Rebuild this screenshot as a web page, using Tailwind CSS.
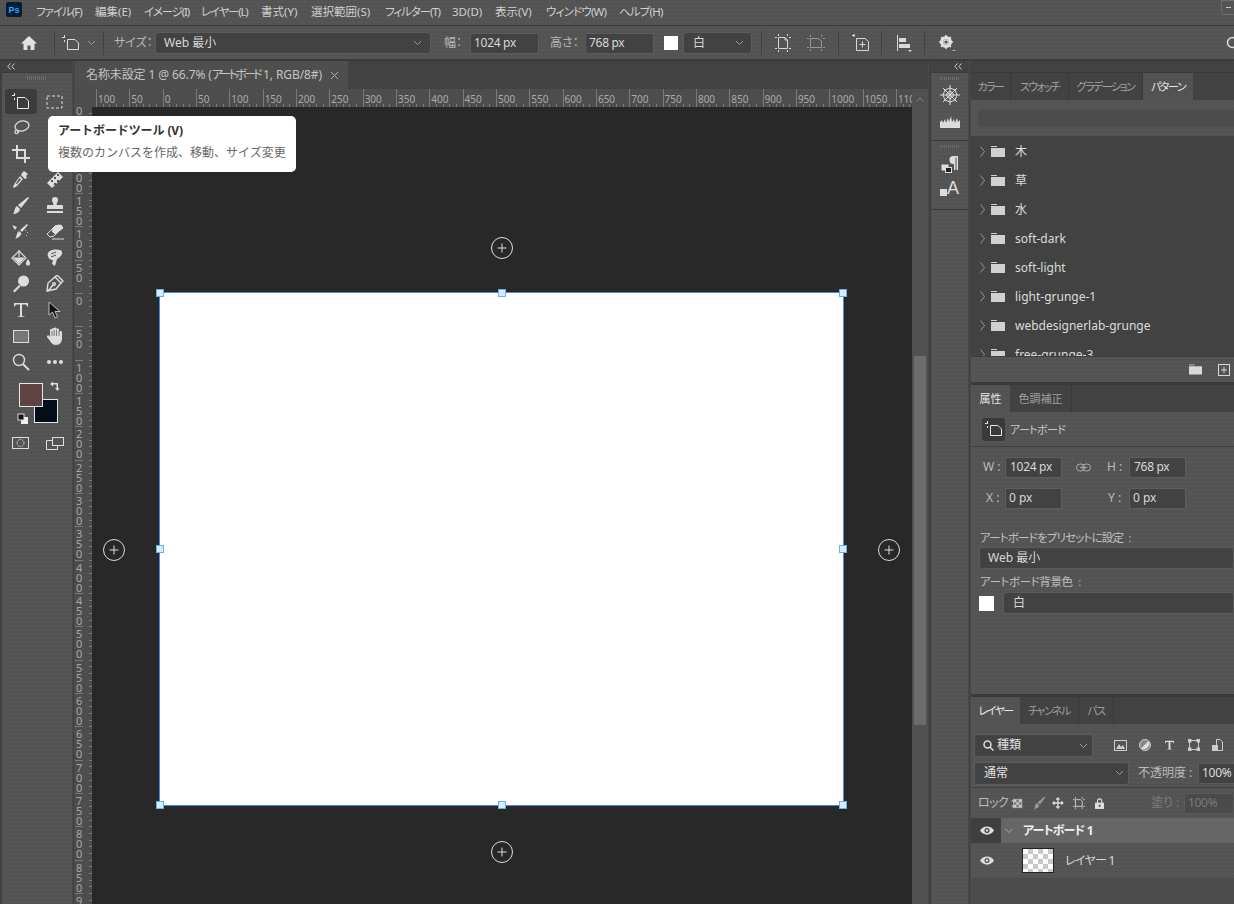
<!DOCTYPE html>
<html lang="ja"><head><meta charset="utf-8">
<script src="https://cdn.jsdelivr.net/npm/@tailwindcss/browser@4"></script>
</head>
<body class="bg-[#535353]">
<div class="relative flex flex-col w-[1234px] h-[904px] overflow-hidden bg-[#535353] bg-[radial-gradient(circle,#5b5b5b_0.6px,transparent_0.8px)] bg-[length:4px_4px] text-[12px] leading-none text-[#d4d4d4] font-['Noto_Sans','Noto_Sans_CJK_JP',sans-serif] [font-feature-settings:'palt']">

<!-- menu -->
<header class="relative flex items-center h-[24px] pb-[1px] shrink-0 border-b border-[#3c3c3c] box-content pl-[36px] whitespace-nowrap text-[#cfcfcf] text-[11.5px] -mb-[1px]">
  <svg class="absolute left-[6px] top-[2px]" width="16" height="15" viewBox="0 0 16 15"><rect width="16" height="15" rx="2" fill="#001e36"/><text x="2.5" y="11" font-size="9" font-weight="700" fill="#31a8ff" font-family="Liberation Sans">Ps</text></svg>
  <span class="w-[59px] tracking-[-1px]">ファイル(F)</span>
  <span class="w-[49px]">編集(E)</span>
  <span class="w-[57px] tracking-[-1.2px]">イメージ(I)</span>
  <span class="w-[60px] tracking-[-1.2px]">レイヤー(L)</span>
  <span class="w-[50px]">書式(Y)</span>
  <span class="w-[74px]">選択範囲(S)</span>
  <span class="w-[67px] tracking-[-1.1px]">フィルター(T)</span>
  <span class="w-[43px]">3D(D)</span>
  <span class="w-[51px]">表示(V)</span>
  <span class="w-[73px] tracking-[-0.8px]">ウィンドウ(W)</span>
  <span class="tracking-[-0.8px]">ヘルプ(H)</span>
  <span class="absolute left-[1221px] top-0 w-[20px] h-[15px] border border-[#6e6e6e] rounded-bl-[3px] flex items-center pl-[4px]"><span class="w-[5px] h-[1px] bg-[#ccc]"></span></span>
</header>

<!-- options -->
<div class="flex items-center h-[32px] pt-[2px] shrink-0 border-b-2 border-[#3a3a3a] box-content whitespace-nowrap">
  <div class="w-[54px] h-[24px] flex items-center justify-center border-r border-[#404040] box-content pl-[6px] -ml-[6px]">
    <svg class="ml-[4px]" width="18" height="16" viewBox="0 0 18 16" fill="#e2e2e2"><path d="M9 1 L1 8.5 H3.5 V15 H7.5 V10.5 H10.5 V15 H14.5 V8.5 H17 Z"/></svg>
  </div>
  <div class="w-[49px] h-[24px] flex items-center border-r border-[#404040] pl-[7px] gap-[7px]">
    <svg width="18" height="16" viewBox="0 0 18 16" fill="none" stroke="#dcdcdc"><path d="M5.5 4.5 H13 L16.5 8 V14.5 H5.5 Z"/><path d="M2.5 0 V3 M0 2.5 H3 M2.5 5 V7"/></svg>
    <svg width="9" height="6" viewBox="0 0 9 6" fill="none" stroke="#999"><path d="M1 1 L4.5 4.5 L8 1"/></svg>
  </div>
  <span class="ml-[10px] w-[41px] text-[#b8b8b8]">サイズ：</span>
  <div class="w-[276px] h-[22px] bg-[#424242] border border-[#5c5c5c] rounded-[3px] flex items-center justify-between px-[8px] text-[#d8d8d8]"><span>Web 最小</span><svg width="9" height="6" viewBox="0 0 9 6" fill="none" stroke="#999"><path d="M1 1 L4.5 4.5 L8 1"/></svg></div>
  <span class="ml-[13px] w-[26px] text-[#b8b8b8]">幅：</span>
  <div class="w-[69px] h-[21px] bg-[#424242] border border-[#5c5c5c] flex items-center pl-[3px] text-[#d8d8d8] tracking-[-0.3px]">1024 px</div>
  <span class="ml-[11px] w-[35px] text-[#b8b8b8]">高さ：</span>
  <div class="w-[69px] h-[21px] bg-[#424242] border border-[#5c5c5c] flex items-center pl-[3px] text-[#d8d8d8] tracking-[-0.3px]">768 px</div>
  <span class="ml-[10px] w-[14px] h-[14px] bg-white shrink-0"></span>
  <div class="ml-[5px] w-[69px] h-[22px] bg-[#424242] border border-[#5c5c5c] rounded-[3px] flex items-center justify-between px-[9px] text-[#d8d8d8]"><span>白</span><svg width="9" height="6" viewBox="0 0 9 6" fill="none" stroke="#999" class="-mr-[2px]"><path d="M1 1 L4.5 4.5 L8 1"/></svg></div>
  <span class="ml-[9px] w-[1px] h-[24px] bg-[#404040]"></span>
  <svg class="ml-[13px]" width="16" height="18" viewBox="0 0 16 18" fill="none" stroke="#d8d8d8"><path d="M3.5 3.5 H10 L12.5 6 V14.5 H3.5 Z M10 3.5 V6 H12.5"/><path d="M0 3.5 H2 M14 3.5 H16 M0 14.5 H2 M14 14.5 H16 M3.5 0 V2 M12.5 0 V2 M3.5 16 V18 M12.5 16 V18"/></svg>
  <svg class="ml-[16px]" width="18" height="16" viewBox="0 0 18 16" fill="none" stroke="#999"><path d="M3.5 3.5 H11 L14.5 6 V12.5 H3.5 Z"/><path d="M0 3.5 H2 M16 3.5 H18 M0 12.5 H2 M16 12.5 H18 M3.5 0 V2 M14.5 0 V2 M3.5 14 V16 M14.5 14 V16"/></svg>
  <span class="ml-[13px] w-[1px] h-[24px] bg-[#404040]"></span>
  <svg class="ml-[13px]" width="18" height="18" viewBox="0 0 18 18" fill="none" stroke="#d8d8d8"><path d="M4.5 4.5 H13 L16.5 7.5 V16.5 H4.5 Z M7.5 10.5 H13.5 M10.5 7.5 V13.5"/><path d="M2 0 V3 M0 1.5 H3"/></svg>
  <span class="ml-[11px] w-[1px] h-[24px] bg-[#404040]"></span>
  <svg class="ml-[14px]" width="16" height="18" viewBox="0 0 16 18" fill="#d8d8d8"><rect x="1" y="1" width="1" height="16"/><rect x="3" y="4" width="7" height="4"/><rect x="3" y="10" width="11" height="4"/><path d="M12 16 h4 l-2 2z" /></svg>
  <span class="ml-[12px] w-[1px] h-[24px] bg-[#404040]"></span>
  <svg class="ml-[14px]" width="18" height="16" viewBox="0 0 18 16"><circle cx="7" cy="7" r="4.5" fill="none" stroke="#e0e0e0" stroke-width="3"/><path d="M7 0 V14 M0 7 H14 M2 2 L12 12 M12 2 L2 12" stroke="#e0e0e0" stroke-width="1.5"/><circle cx="7" cy="7" r="1.6" fill="#535353"/><path d="M13 15 h4 l-2 1z" fill="#ddd"/></svg>
  <svg class="absolute left-[1226px] top-[36px]" width="14" height="14" viewBox="0 0 14 14" fill="none" stroke="#ddd" stroke-width="1.5"><circle cx="6.5" cy="6.5" r="5"/></svg>
</div>

<!-- main -->
<div class="flex flex-1 min-h-0">
  <!-- left tools -->
  <aside class="w-[72px] shrink-0 border-l-2 border-[#3f3f3f] flex flex-col">
    <div class="h-[11px] bg-[#424242] border-b border-[#3a3a3a] box-content flex items-center pl-[5px] text-[#ccc]"><svg width="8" height="7" viewBox="0 0 8 7" fill="none" stroke="#ccc"><path d="M3.5 .5 L.8 3.5 L3.5 6.5 M7.5 .5 L4.8 3.5 L7.5 6.5"/></svg></div>
    <div class="h-[4px] mt-[3px] mx-auto w-[20px] bg-[repeating-linear-gradient(90deg,#6b6b6b_0_1px,transparent_1px_2px)]"></div>
    <div class="grid grid-cols-[35px_33px] auto-rows-[26px] mt-[9px] pl-[1px]">
      <div class="relative flex items-center justify-center"><span class="absolute left-[2px] top-0 w-[32px] h-[25px] bg-[#3c3c3c] rounded-[3px]"></span>
        <svg class="relative -mt-[2px]" width="20" height="18" viewBox="0 0 20 18" fill="none" stroke="#e8e8e8"><path d="M6.5 5.5 H14 L17.5 9 V16.5 H6.5 Z"/><path d="M3.5 1 V4 M1 3.5 H4 M3.5 6 V8"/></svg></div>
      <div class="flex items-center justify-center -mt-[1px]"><svg width="18" height="14" viewBox="0 0 18 14" fill="none" stroke="#ddd" stroke-dasharray="3 2"><rect x="1" y="1" width="15" height="12"/></svg></div>

      <div class="flex items-center justify-center"><svg width="18" height="18" viewBox="0 0 18 18" fill="none" stroke="#ddd" stroke-width="1.3"><ellipse cx="10" cy="7" rx="7" ry="5" transform="rotate(-15 10 7)"/><path d="M4 11 C2 13 3 16 6 14 C7 13 6 12 5 13"/></svg></div>
      <div class="flex items-center justify-center"><svg width="14" height="14" viewBox="0 0 14 14" fill="none" stroke="#ddd" stroke-dasharray="2 2"><circle cx="7" cy="7" r="6"/></svg></div>

      <div class="flex items-center justify-center -mt-[1px]"><svg width="18" height="18" viewBox="0 0 18 18" fill="none" stroke="#ddd" stroke-width="2"><path d="M5 0 V13 H18 M0 5 H13 V18"/></svg></div>
      <div class="flex items-center justify-center -mt-[1px]"><svg width="14" height="16" viewBox="0 0 14 16" fill="none" stroke="#ddd"><path d="M1 2 V14 M4 1 H10"/></svg></div>

      <div class="flex items-center justify-center"><svg width="16" height="18" viewBox="0 0 16 18" fill="#ddd"><path d="M9 2 L11 0 L15 3 L13 5 L14 7 L12 8 L8 4 Z"/><path d="M7 5 L10 8 L4 15 L1 17 L0 16 L2 12 Z M6.5 7 L3 12.5 L3.5 13.5 L8 8.5Z"/></svg></div>
      <div class="flex items-center justify-center"><svg width="18" height="18" viewBox="0 0 18 18" fill="#ddd"><path d="M1 12 L12 1 L17 6 L6 17 Z"/><g fill="#535353"><rect x="8" y="6" width="2" height="2"/><rect x="5" y="9" width="2" height="2"/><rect x="11" y="9" width="2" height="2"/><rect x="8" y="12" width="2" height="2"/><rect x="11" y="3" width="2" height="2"/></g></svg></div>

      <div class="flex items-center justify-center"><svg width="16" height="18" viewBox="0 0 16 18" fill="#ddd"><path d="M15 0 L16 1 L8 11 L5 8 Z"/><path d="M4 9 L7 12 C7 15 3 17 0 17 C2 15 1 11 4 9Z"/></svg></div>
      <div class="flex items-center justify-center"><svg width="18" height="18" viewBox="0 0 18 18" fill="#ddd"><path d="M6 3 a3 3 0 1 1 6 0 c0 2-1.5 3-1.5 5 H16 a1 1 0 0 1 1 1 V12 H1 V9 a1 1 0 0 1 1-1 H7.5 C7.5 6 6 5 6 3Z"/><rect x="1" y="14" width="16" height="2"/></svg></div>

      <div class="flex items-center justify-center"><svg width="20" height="18" viewBox="0 0 20 18" fill="#ddd"><path d="M9 7 L16 1 L17 2 L11 9 Z"/><path d="M8 8 L10.5 10.5 C10 13 7 15 4 16 C6 14 5 10 8 8 Z"/><path d="M1 2 L6 4 L4 7 Z"/><g fill="#bbb"><rect x="14" y="7" width="1" height="1"/><rect x="16" y="9" width="1" height="1"/><rect x="15" y="12" width="1" height="1"/></g></svg></div>
      <div class="flex items-center justify-center"><svg width="18" height="16" viewBox="0 0 18 16" fill="none" stroke="#ddd"><path d="M1 10 L9 2 L13 1 L16 4 L8 12 L4 13 Z" fill="none"/><path d="M9 2 L15 1 L17 4 L9 10 L6 7 Z" fill="#ddd"/><path d="M6 15 H18"/></svg></div>

      <div class="flex items-center justify-center"><svg width="20" height="18" viewBox="0 0 20 18" fill="none" stroke="#ddd" stroke-width="1.2"><path d="M8 2 L15 9 L8 16 L1 9 Z"/><path d="M8 1 V8"/><path d="M3.500 9 H12.500 L8 14Z" fill="#ddd"/><path d="M17 11 c2 3 2 5 0 5 c-2 0-2-2 0-5Z" fill="#ddd"/></svg></div>
      <div class="flex items-center justify-center"><svg width="18" height="18" viewBox="0 0 18 18" fill="#ddd"><path d="M4 2 C8 0 15 0 16 3 C17 6 13 9 11 10 L9 17 L6 15 L7 11 C4 11 2 9 2 7 C1 5 2 3 4 2Z"/><path d="M5 5 L10 3 M5 8 L10 6" stroke="#535353" fill="none"/></svg></div>

      <div class="flex items-center justify-center"><svg width="18" height="18" viewBox="0 0 18 18" fill="#ddd"><circle cx="11.5" cy="6" r="5.5"/><path d="M7 10 L1 16 L2.5 17.5 L8.5 11.5Z"/></svg></div>
      <div class="flex items-center justify-center"><svg width="18" height="18" viewBox="0 0 18 18" fill="none" stroke="#ddd" stroke-width="1.4"><path d="M1 16 L2 8 L9 2 L15 8 L10 14 Z"/><path d="M9 2 L11 0 L17 6 L15 8"/><path d="M2 16 L7 10"/><circle cx="8" cy="9" r="1.3"/></svg></div>

      <div class="flex items-center justify-center"><svg width="16" height="16" viewBox="0 0 16 16" fill="#ddd"><path d="M1 1 H15 V4.500 H14 C14 3 13 2.500 12 2.500 H9 V13 C9 14 10 14.500 11.500 14.500 V15 H4.500 V14.500 C6 14.500 7 14 7 13 V2.500 H4 C3 2.500 2 3 2 4.500 H1 Z"/></svg></div>
      <div class="flex items-center justify-center"><svg width="14" height="17" viewBox="0 0 14 17"><path d="M1 0 V13 L4.5 10 L7 16 L9.5 15 L7 9.5 H12 Z" fill="#111" stroke="#ddd" stroke-width=".8"/></svg></div>

      <div class="flex items-center justify-center"><span class="w-[16px] h-[13px] bg-[#777] border border-[#ddd]"></span></div>
      <div class="flex items-center justify-center"><svg width="18" height="18" viewBox="0 0 18 18" fill="#ddd"><path d="M1 9 C2 8 3 8 4 10 V3 C4 1.5 6 1.5 6 3 V2 C6 .5 8 .5 8 2 V1.5 C8 0 10.500 0 10.500 1.500 V2.500 C10.500 1 13 1 13 2.500 V5 C13 3.500 16 3.500 16 5 V11 C16 15 14 18 10 18 C6 18 5 15 1 10 Z"/><path d="M6 4 V9 M8.200 3 V9 M10.500 3 V9 M13 4 V9" stroke="#535353" fill="none" stroke-width=".7"/></svg></div>

      <div class="flex items-center justify-center"><svg width="18" height="18" viewBox="0 0 18 18" fill="none" stroke="#ddd" stroke-width="1.4"><circle cx="7" cy="7" r="5.500"/><path d="M11 11 L17 17" stroke-width="2"/></svg></div>
      <div class="flex items-center justify-center gap-[2px]"><span class="w-[4px] h-[4px] rounded-full bg-[#ddd]"></span><span class="w-[4px] h-[4px] rounded-full bg-[#ddd]"></span><span class="w-[4px] h-[4px] rounded-full bg-[#ddd]"></span></div>
    </div>
    <!-- colour -->
    <div class="relative h-[52px] mt-[8px] ml-[-2px]">
      <span class="absolute left-[34px] top-[16px] w-[24px] h-[24px] bg-[#050e18] border border-[#e6e6e6]"></span>
      <span class="absolute left-[19px] top-0 w-[24px] h-[24px] bg-[#5f4343] border border-[#e6e6e6]"></span>
      <svg class="absolute left-[49px] top-[-2px]" width="12" height="12" viewBox="0 0 12 12" fill="#ddd"><path d="M1 3 L4 .5 V2 H9 V7 H10.500 L8.500 10 L6 7 H7.500 V3.500 H4 V5.500 Z"/></svg>
      <svg class="absolute left-[17px] top-[30px]" width="12" height="12" viewBox="0 0 12 12"><rect x="4" y="4" width="7" height="7" fill="#eee"/><rect x="1" y="1" width="6" height="6" fill="#111" stroke="#ddd"/></svg>
    </div>
    <div class="flex pl-[10px] gap-[16px] items-center h-[16px]">
      <svg width="18" height="13" viewBox="0 0 18 13" fill="none" stroke="#ddd"><rect x=".5" y=".5" width="16" height="11"/><circle cx="8.500" cy="6" r="3.500" stroke-dasharray="1.500 1"/></svg>
      <svg width="18" height="13" viewBox="0 0 18 13" fill="none" stroke="#ddd"><rect x="6.500" y=".5" width="11" height="8"/><path d="M6 3.500 H.5 V12.500 H11.500 V9"/></svg>
    </div>
  </aside>
  <div class="w-[3px] shrink-0 bg-[#3f3f3f] border-x border-[#4a4a4a]"></div>

  <!-- document -->
  <main class="w-[853px] shrink-0 flex flex-col">
    <div class="h-[28px] shrink-0 bg-[#424242] flex">
      <div class="w-[273px] h-full bg-[#4e4e4e] flex items-center pl-[11px] text-[#c4c4c4] whitespace-nowrap"><span class="w-[238px] shrink-0 tracking-[-0.1px]">名称未設定 1 @ 66.7% (<span class="tracking-[-2.7px]">アートボード</span> 1, RGB/8#)</span><svg class="ml-[7px] shrink-0" width="7" height="7" viewBox="0 0 7 7" stroke="#aaa"><path d="M0 0 L7 7 M7 0 L0 7"/></svg></div>
    </div>
    <div class="flex flex-1 min-h-0">
      <div class="w-[837px] shrink-0 flex flex-col">
        <!-- h ruler -->
        <div class="flex h-[18px] shrink-0 bg-[#4d4d4d] overflow-hidden text-[10px] text-[#aaa]">
          <div class="w-[21px] shrink-0 h-full"></div>
          <div class="flex bg-[repeating-linear-gradient(90deg,#7a7a7a_0_1px,transparent_1px_6.667px)] bg-[length:100%_3px] bg-bottom bg-no-repeat h-full">
            <span class="w-[33.33px] h-full shrink-0 border-l border-[#7a7a7a] pl-[1px] pt-[5px]">100</span><span class="w-[33.33px] h-full shrink-0 border-l border-[#7a7a7a] pl-[1px] pt-[5px]">50</span><span class="w-[33.33px] h-full shrink-0 border-l border-[#7a7a7a] pl-[1px] pt-[5px]">0</span><span class="w-[33.33px] h-full shrink-0 border-l border-[#7a7a7a] pl-[1px] pt-[5px]">50</span><span class="w-[33.33px] h-full shrink-0 border-l border-[#7a7a7a] pl-[1px] pt-[5px]">100</span><span class="w-[33.33px] h-full shrink-0 border-l border-[#7a7a7a] pl-[1px] pt-[5px]">150</span><span class="w-[33.33px] h-full shrink-0 border-l border-[#7a7a7a] pl-[1px] pt-[5px]">200</span><span class="w-[33.33px] h-full shrink-0 border-l border-[#7a7a7a] pl-[1px] pt-[5px]">250</span><span class="w-[33.33px] h-full shrink-0 border-l border-[#7a7a7a] pl-[1px] pt-[5px]">300</span><span class="w-[33.33px] h-full shrink-0 border-l border-[#7a7a7a] pl-[1px] pt-[5px]">350</span><span class="w-[33.33px] h-full shrink-0 border-l border-[#7a7a7a] pl-[1px] pt-[5px]">400</span><span class="w-[33.33px] h-full shrink-0 border-l border-[#7a7a7a] pl-[1px] pt-[5px]">450</span><span class="w-[33.33px] h-full shrink-0 border-l border-[#7a7a7a] pl-[1px] pt-[5px]">500</span><span class="w-[33.33px] h-full shrink-0 border-l border-[#7a7a7a] pl-[1px] pt-[5px]">550</span><span class="w-[33.33px] h-full shrink-0 border-l border-[#7a7a7a] pl-[1px] pt-[5px]">600</span><span class="w-[33.33px] h-full shrink-0 border-l border-[#7a7a7a] pl-[1px] pt-[5px]">650</span><span class="w-[33.33px] h-full shrink-0 border-l border-[#7a7a7a] pl-[1px] pt-[5px]">700</span><span class="w-[33.33px] h-full shrink-0 border-l border-[#7a7a7a] pl-[1px] pt-[5px]">750</span><span class="w-[33.33px] h-full shrink-0 border-l border-[#7a7a7a] pl-[1px] pt-[5px]">800</span><span class="w-[33.33px] h-full shrink-0 border-l border-[#7a7a7a] pl-[1px] pt-[5px]">850</span><span class="w-[33.33px] h-full shrink-0 border-l border-[#7a7a7a] pl-[1px] pt-[5px]">900</span><span class="w-[33.33px] h-full shrink-0 border-l border-[#7a7a7a] pl-[1px] pt-[5px]">950</span><span class="w-[33.33px] h-full shrink-0 border-l border-[#7a7a7a] pl-[1px] pt-[5px]">1000</span><span class="w-[33.33px] h-full shrink-0 border-l border-[#7a7a7a] pl-[1px] pt-[5px]">1050</span><span class="w-[18px] h-full shrink-0 border-l border-[#7a7a7a] pl-[1px] pt-[5px] overflow-hidden">110</span>
          </div>
        </div>
        <div class="flex flex-1 min-h-0">
          <!-- v ruler -->
          <div class="w-[17px] shrink-0 h-full bg-[#4d4d4d] overflow-hidden text-[11px] leading-[10px] text-[#a8a8a8]">
            <div class="-mt-[14px] bg-[repeating-linear-gradient(180deg,#7a7a7a_0_1px,transparent_1px_6.667px)] bg-[length:3px_100%] bg-right bg-no-repeat">
              <div class="h-[33.33px] border-t border-[#7a7a7a] pl-[1px] pt-[2px] w-[8px] break-all">300</div>
              <div class="h-[33.33px] border-t border-[#7a7a7a] pl-[1px] pt-[2px] w-[8px] break-all">250</div>
              <div class="h-[33.33px] border-t border-[#7a7a7a] pl-[1px] pt-[2px] w-[8px] break-all">200</div>
              <div class="h-[33.33px] border-t border-[#7a7a7a] pl-[1px] pt-[2px] w-[8px] break-all">150</div>
              <div class="h-[33.33px] border-t border-[#7a7a7a] pl-[1px] pt-[2px] w-[8px] break-all">100</div>
              <div class="h-[33.33px] border-t border-[#7a7a7a] pl-[1px] pt-[2px] w-[8px] break-all">50</div>
              <div class="h-[33.33px] border-t border-[#7a7a7a] pl-[1px] pt-[2px] w-[8px] break-all">0</div>
              <div class="h-[33.33px] border-t border-[#7a7a7a] pl-[1px] pt-[2px] w-[8px] break-all">50</div>
              <div class="h-[33.33px] border-t border-[#7a7a7a] pl-[1px] pt-[2px] w-[8px] break-all">100</div>
              <div class="h-[33.33px] border-t border-[#7a7a7a] pl-[1px] pt-[2px] w-[8px] break-all">150</div>
              <div class="h-[33.33px] border-t border-[#7a7a7a] pl-[1px] pt-[2px] w-[8px] break-all">200</div>
              <div class="h-[33.33px] border-t border-[#7a7a7a] pl-[1px] pt-[2px] w-[8px] break-all">250</div>
              <div class="h-[33.33px] border-t border-[#7a7a7a] pl-[1px] pt-[2px] w-[8px] break-all">300</div>
              <div class="h-[33.33px] border-t border-[#7a7a7a] pl-[1px] pt-[2px] w-[8px] break-all">350</div>
              <div class="h-[33.33px] border-t border-[#7a7a7a] pl-[1px] pt-[2px] w-[8px] break-all">400</div>
              <div class="h-[33.33px] border-t border-[#7a7a7a] pl-[1px] pt-[2px] w-[8px] break-all">450</div>
              <div class="h-[33.33px] border-t border-[#7a7a7a] pl-[1px] pt-[2px] w-[8px] break-all">500</div>
              <div class="h-[33.33px] border-t border-[#7a7a7a] pl-[1px] pt-[2px] w-[8px] break-all">550</div>
              <div class="h-[33.33px] border-t border-[#7a7a7a] pl-[1px] pt-[2px] w-[8px] break-all">600</div>
              <div class="h-[33.33px] border-t border-[#7a7a7a] pl-[1px] pt-[2px] w-[8px] break-all">650</div>
              <div class="h-[33.33px] border-t border-[#7a7a7a] pl-[1px] pt-[2px] w-[8px] break-all">700</div>
              <div class="h-[33.33px] border-t border-[#7a7a7a] pl-[1px] pt-[2px] w-[8px] break-all">750</div>
              <div class="h-[33.33px] border-t border-[#7a7a7a] pl-[1px] pt-[2px] w-[8px] break-all">800</div>
              <div class="h-[33.33px] border-t border-[#7a7a7a] pl-[1px] pt-[2px] w-[8px] break-all">850</div>
              <div class="h-[33.33px] border-t border-[#7a7a7a] pl-[1px] pt-[2px] w-[8px] break-all">900</div>
            </div>
          </div>
          <!-- canvas: free placement -->
          <div class="relative w-[820px] h-full bg-[#282828] overflow-hidden">
            <div class="absolute left-[67px] top-[185px] w-[685px] h-[514px] bg-white border border-[#4a8ae0]"></div>
            <span class="absolute left-[64px] top-[182px] w-[8px] h-[8px] bg-[#d8ecfb] border border-[#6bb0ec]"></span>
            <span class="absolute left-[406px] top-[182px] w-[8px] h-[8px] bg-[#d8ecfb] border border-[#6bb0ec]"></span>
            <span class="absolute left-[747px] top-[182px] w-[8px] h-[8px] bg-[#d8ecfb] border border-[#6bb0ec]"></span>
            <span class="absolute left-[64px] top-[438px] w-[8px] h-[8px] bg-[#d8ecfb] border border-[#6bb0ec]"></span>
            <span class="absolute left-[747px] top-[438px] w-[8px] h-[8px] bg-[#d8ecfb] border border-[#6bb0ec]"></span>
            <span class="absolute left-[64px] top-[694px] w-[8px] h-[8px] bg-[#d8ecfb] border border-[#6bb0ec]"></span>
            <span class="absolute left-[406px] top-[694px] w-[8px] h-[8px] bg-[#d8ecfb] border border-[#6bb0ec]"></span>
            <span class="absolute left-[747px] top-[694px] w-[8px] h-[8px] bg-[#d8ecfb] border border-[#6bb0ec]"></span>
            <svg class="absolute left-[399px] top-[130px]" width="22" height="22" viewBox="0 0 22 22" fill="none" stroke="#dcdcdc"><circle cx="11" cy="11" r="10.500"/><path d="M6.500 11 H15.500 M11 6.500 V15.500"/></svg>
            <svg class="absolute left-[11px] top-[432px]" width="22" height="22" viewBox="0 0 22 22" fill="none" stroke="#dcdcdc"><circle cx="11" cy="11" r="10.500"/><path d="M6.500 11 H15.500 M11 6.500 V15.500"/></svg>
            <svg class="absolute left-[786px] top-[432px]" width="22" height="22" viewBox="0 0 22 22" fill="none" stroke="#dcdcdc"><circle cx="11" cy="11" r="10.500"/><path d="M6.500 11 H15.500 M11 6.500 V15.500"/></svg>
            <svg class="absolute left-[399px] top-[734px]" width="22" height="22" viewBox="0 0 22 22" fill="none" stroke="#dcdcdc"><circle cx="11" cy="11" r="10.500"/><path d="M6.500 11 H15.500 M11 6.500 V15.500"/></svg>
          </div>
        </div>
      </div>
      <!-- scrollbar -->
      <div class="w-[16px] shrink-0 h-full flex flex-col items-center pt-[8px] bg-[#505050]">
        <svg width="8" height="5" viewBox="0 0 8 5" fill="none" stroke="#888"><path d="M.5 4.500 L4 1 L7.500 4.500"/></svg>
        <div class="w-[12px] h-[369px] mt-[254px] bg-[#6c6c6c]"></div>
      </div>
    </div>
  </main>
  <div class="w-[3px] shrink-0 bg-[#3f3f3f] border-l border-[#4a4a4a]"></div>

  <!-- icon strip -->
  <div class="w-[37px] shrink-0 flex flex-col">
    <div class="h-[11px] shrink-0 bg-[#424242] -mr-[2px] border-b border-[#3a3a3a] box-content flex items-center justify-center pl-[14px]"><svg width="8" height="7" viewBox="0 0 8 7" fill="none" stroke="#ccc"><path d="M3.500 .5 L.8 3.500 L3.500 6.500 M7.500 .5 L4.800 3.500 L7.500 6.500"/></svg></div>
    <div class="h-[68px] shrink-0 border-b border-[#3a3a3a] flex flex-col items-center pt-[4px]">
      <div class="h-[3px] w-[20px] bg-[repeating-linear-gradient(90deg,#6b6b6b_0_1px,transparent_1px_2px)]"></div>
      <svg class="mt-[5px]" width="20" height="20" viewBox="0 0 20 20" fill="none" stroke="#ddd"><path d="M10 0 V20 M0 10 H20 M3 3 L17 17 M17 3 L3 17"/><path d="M10 3 L15 5 L17 10 L15 15 L10 17 L5 15 L3 10 L5 5Z M10 6.500 L12.500 7.500 L13.500 10 L12.500 12.500 L10 13.500 L7.500 12.500 L6.500 10 L7.500 7.500Z"/></svg>
      <svg class="mt-[11px]" width="20" height="13" viewBox="0 0 20 13" fill="#ddd"><path d="M0 12 V6 L2 4 L3 7 L5 3 L6 7 L8 2 L9 6 L11 0 L12 6 L14 3 L15 7 L17 2 L18 6 L20 4 V12 Z"/></svg>
    </div>
    <div class="h-[69px] shrink-0 border-b border-[#3a3a3a] flex flex-col items-center pt-[4px]">
      <div class="h-[3px] w-[20px] bg-[repeating-linear-gradient(90deg,#6b6b6b_0_1px,transparent_1px_2px)]"></div>
      <svg class="mt-[7px] ml-[1px]" width="18" height="18" viewBox="0 0 18 18"><path d="M12 1 H17 V15 H15.500 V2.500 H14.500 V15 H13 V9 A4 4 0 0 1 12 1Z" fill="#ddd"/><rect x=".5" y="9.500" width="7" height="6" fill="#ddd"/><rect x="4.500" y="12.500" width="6" height="5" fill="#222" stroke="#ddd"/></svg>
      <div class="mt-[6px] flex items-end"><span class="w-[7px] h-[7px] bg-[#ddd] mb-[1px]"></span><span class="text-[18px] leading-[18px] font-['Liberation_Sans'] text-[#ddd]">A</span></div>
    </div>
  </div>
  <div class="w-[3px] shrink-0 bg-[#3f3f3f] border-x border-[#4a4a4a]"></div>

  <!-- right panels -->
  <aside class="flex-1 min-w-0 flex flex-col overflow-hidden whitespace-nowrap">
    <div class="h-[11px] bg-[#424242] border-b border-[#3a3a3a] box-content shrink-0"></div>
    <!-- pattern panel -->
    <div class="flex h-[27px] shrink-0 bg-[#424242] text-[#a2a2a2] text-[11px] tracking-[-1.5px]">
      <span class="w-[40px] border-r border-[#383838] flex items-center justify-center">カラー</span>
      <span class="w-[58px] border-r border-[#383838] flex items-center justify-center">スウォッチ</span>
      <span class="w-[74px] border-r border-[#383838] flex items-center justify-center">グラデーション</span>
      <span class="w-[50px] bg-[#535353] text-[#e6e6e6] flex items-center justify-center">パターン</span>
    </div>
    <div class="h-[36px] shrink-0 flex items-center pl-[7px]"><span class="w-full h-[17px] bg-[#4c4c4c]"></span></div>
    <div class="h-[220px] shrink-0 pt-[1px] bg-[#424242] overflow-hidden text-[12px] text-[#dcdcdc]">
      <div class="h-[29px] flex items-center pl-[9px] gap-[4px]"><svg width="5" height="11" viewBox="0 0 5 11" fill="none" stroke="#999"><path d="M.5 .5 L4.500 5.500 L.5 10.500"/></svg><svg class="ml-[2px]" width="14" height="11" viewBox="0 0 14 11" fill="#d0d0d0"><path d="M0 0 H6 V1 H0Z M0 2 H14 V11 H0Z"/></svg><span class="ml-[6px]">木</span></div>
      <div class="h-[29px] flex items-center pl-[9px] gap-[4px]"><svg width="5" height="11" viewBox="0 0 5 11" fill="none" stroke="#999"><path d="M.5 .5 L4.500 5.500 L.5 10.500"/></svg><svg class="ml-[2px]" width="14" height="11" viewBox="0 0 14 11" fill="#d0d0d0"><path d="M0 0 H6 V1 H0Z M0 2 H14 V11 H0Z"/></svg><span class="ml-[6px]">草</span></div>
      <div class="h-[29px] flex items-center pl-[9px] gap-[4px]"><svg width="5" height="11" viewBox="0 0 5 11" fill="none" stroke="#999"><path d="M.5 .5 L4.500 5.500 L.5 10.500"/></svg><svg class="ml-[2px]" width="14" height="11" viewBox="0 0 14 11" fill="#d0d0d0"><path d="M0 0 H6 V1 H0Z M0 2 H14 V11 H0Z"/></svg><span class="ml-[6px]">水</span></div>
      <div class="h-[29px] flex items-center pl-[9px] gap-[4px]"><svg width="5" height="11" viewBox="0 0 5 11" fill="none" stroke="#999"><path d="M.5 .5 L4.500 5.500 L.5 10.500"/></svg><svg class="ml-[2px]" width="14" height="11" viewBox="0 0 14 11" fill="#d0d0d0"><path d="M0 0 H6 V1 H0Z M0 2 H14 V11 H0Z"/></svg><span class="ml-[6px]">soft-dark</span></div>
      <div class="h-[29px] flex items-center pl-[9px] gap-[4px]"><svg width="5" height="11" viewBox="0 0 5 11" fill="none" stroke="#999"><path d="M.5 .5 L4.500 5.500 L.5 10.500"/></svg><svg class="ml-[2px]" width="14" height="11" viewBox="0 0 14 11" fill="#d0d0d0"><path d="M0 0 H6 V1 H0Z M0 2 H14 V11 H0Z"/></svg><span class="ml-[6px]">soft-light</span></div>
      <div class="h-[29px] flex items-center pl-[9px] gap-[4px]"><svg width="5" height="11" viewBox="0 0 5 11" fill="none" stroke="#999"><path d="M.5 .5 L4.500 5.500 L.5 10.500"/></svg><svg class="ml-[2px]" width="14" height="11" viewBox="0 0 14 11" fill="#d0d0d0"><path d="M0 0 H6 V1 H0Z M0 2 H14 V11 H0Z"/></svg><span class="ml-[6px]">light-grunge-1</span></div>
      <div class="h-[29px] flex items-center pl-[9px] gap-[4px]"><svg width="5" height="11" viewBox="0 0 5 11" fill="none" stroke="#999"><path d="M.5 .5 L4.500 5.500 L.5 10.500"/></svg><svg class="ml-[2px]" width="14" height="11" viewBox="0 0 14 11" fill="#d0d0d0"><path d="M0 0 H6 V1 H0Z M0 2 H14 V11 H0Z"/></svg><span class="ml-[6px]">webdesignerlab-grunge</span></div>
      <div class="h-[29px] flex items-center pl-[9px] gap-[4px]"><svg width="5" height="11" viewBox="0 0 5 11" fill="none" stroke="#999"><path d="M.5 .5 L4.500 5.500 L.5 10.500"/></svg><svg class="ml-[2px]" width="14" height="11" viewBox="0 0 14 11" fill="#d0d0d0"><path d="M0 0 H6 V1 H0Z M0 2 H14 V11 H0Z"/></svg><span class="ml-[6px]">free-grunge-3</span></div>
    </div>
    <div class="h-[26px] shrink-0 border-t border-[#3c3c3c] flex items-center pl-[218px] gap-[16px]">
      <svg width="13" height="11" viewBox="0 0 14 11" fill="#d8d8d8"><path d="M0 0 H6 V1 H0Z M0 2 H14 V11 H0Z"/></svg>
      <svg width="12" height="12" viewBox="0 0 12 12" fill="none" stroke="#d8d8d8"><rect x=".5" y=".5" width="11" height="11"/><path d="M3 6 H9 M6 3 V9"/></svg>
    </div>
    <div class="h-[3px] shrink-0 bg-[#3a3a3a]"></div>

    <!-- properties -->
    <div class="flex h-[27px] shrink-0 bg-[#424242] text-[#9e9e9e] text-[11px]">
      <span class="w-[39px] bg-[#535353] text-[#e6e6e6] flex items-center justify-center">属性</span>
      <span class="w-[62px] border-r border-[#383838] flex items-center justify-center">色調補正</span>
    </div>
    <div class="h-[34px] shrink-0 border-b border-[#3f3f3f] box-content flex items-center pl-[11px] gap-[5px] text-[#c6c6c6] text-[11px] tracking-[-0.6px]">
      <span class="w-[23px] h-[23px] bg-[#3a3a3a] rounded-[3px] flex items-center justify-center"><svg width="18" height="16" viewBox="0 0 18 16" fill="none" stroke="#e4e4e4"><path d="M5.500 4.500 H13 L16.500 8 V14.500 H5.500 Z"/><path d="M2.500 0 V3 M0 2.500 H3 M2.500 5 V7"/></svg></span>アートボード
    </div>
    <div class="flex items-center h-[20px] mt-[10px] shrink-0 text-[#bcbcbc]">
      <span class="w-[34px] pl-[12px]">W :</span>
      <span class="w-[57px] h-[21px] bg-[#424242] border border-[#5e5e5e] flex items-center pl-[4px] text-[#d8d8d8] tracking-[-0.3px]">1024 px</span>
      <svg class="ml-[14px]" width="15" height="9" viewBox="0 0 15 9" fill="none" stroke="#aaa"><rect x=".5" y="1" width="8" height="7" rx="3.500"/><rect x="6.500" y="1" width="8" height="7" rx="3.500"/><path d="M4 4.500 H11"/></svg>
      <span class="ml-[16px] w-[22px]">H :</span>
      <span class="w-[57px] h-[21px] bg-[#424242] border border-[#5e5e5e] flex items-center pl-[4px] text-[#d8d8d8] tracking-[-0.3px]">768 px</span>
    </div>
    <div class="flex items-center h-[20px] mt-[11px] shrink-0 text-[#bcbcbc]">
      <span class="w-[34px] pl-[15px]">X :</span>
      <span class="w-[57px] h-[21px] bg-[#424242] border border-[#5e5e5e] flex items-center pl-[3px] text-[#d8d8d8]">0 px</span>
      <span class="ml-[46px] w-[21px]">Y :</span>
      <span class="w-[57px] h-[21px] bg-[#424242] border border-[#5e5e5e] flex items-center pl-[3px] text-[#d8d8d8]">0 px</span>
    </div>
    <div class="mt-[24px] h-[14px] pl-[9px] shrink-0 text-[#c0c0c0] text-[11.5px] tracking-[-0.8px]">アートボードをプリセットに設定 <span class="ml-[3px] text-[#8ab4e8]">:</span></div>
    <div class="ml-[8px] mt-[1px] h-[22px] shrink-0 bg-[#424242] border border-[#5c5c5c] rounded-[3px] flex items-center pl-[8px] text-[#d8d8d8]">Web 最小</div>
    <div class="mt-[7px] h-[14px] pl-[9px] shrink-0 text-[#c0c0c0] text-[11.5px] tracking-[-0.4px]">アートボード背景色 <span class="ml-[3px] text-[#8ab4e8]">:</span></div>
    <div class="flex items-center gap-[9px] pl-[8px] mt-[2px] h-[22px] shrink-0">
      <span class="w-[15px] h-[15px] bg-white shrink-0"></span>
      <span class="flex-1 h-[22px] bg-[#424242] border border-[#5c5c5c] rounded-[3px] flex items-center pl-[9px] text-[#d8d8d8]">白</span>
    </div>
    <div class="flex-1"></div>

    <!-- layers -->
    <div class="h-[3px] shrink-0 bg-[#3a3a3a]"></div>
    <div class="flex h-[27px] shrink-0 bg-[#424242] text-[#9e9e9e] text-[11px] tracking-[-1.5px]">
      <span class="w-[49px] bg-[#535353] text-[#e6e6e6] flex items-center justify-center">レイヤー</span>
      <span class="w-[59px] border-r border-[#383838] flex items-center justify-center">チャンネル</span>
      <span class="w-[35px] border-r border-[#383838] flex items-center justify-center">パス</span>
    </div>
    <div class="h-[36px] pt-[6px] shrink-0 flex items-center pl-[3px]">
      <div class="w-[119px] h-[23px] bg-[#424242] border border-[#5c5c5c] rounded-[3px] flex items-center pl-[8px] gap-[3px] relative text-[#e0e0e0]">
        <svg width="11" height="11" viewBox="0 0 11 11" fill="none" stroke="#ddd" stroke-width="1.500"><circle cx="4.500" cy="4.500" r="3.500"/><path d="M7 7 L10.500 10.500"/></svg>種類
        <svg class="absolute right-[4px] top-[8px]" width="9" height="6" viewBox="0 0 9 6" fill="none" stroke="#999"><path d="M1 1 L4.500 4.500 L8 1"/></svg>
      </div>
      <svg class="ml-[21px]" width="13" height="11" viewBox="0 0 13 11"><rect x=".5" y=".5" width="12" height="10" fill="none" stroke="#ccc"/><path d="M2 9 L5 4 L7 7 L9 5 L11 9Z" fill="#ccc"/></svg>
      <svg class="ml-[12px]" width="12" height="12" viewBox="0 0 12 12"><circle cx="6" cy="6" r="5.500" fill="#888" stroke="#ccc"/><path d="M9.500 2 A5.500 5.500 0 0 1 2 9.500 Z" fill="#ddd"/></svg>
      <svg class="ml-[13px]" width="11" height="10" viewBox="0 0 16 16" fill="#ddd"><path d="M1 1 H15 V5 H14 C14 3.500 13 3 12 3 H9.500 V13 C9.500 14 10 14.500 11.500 14.500 V15 H4.500 V14.500 C6 14.500 6.500 14 6.500 13 V3 H4 C3 3 2 3.500 2 5 H1 Z"/></svg>
      <svg class="ml-[13px]" width="12" height="12" viewBox="0 0 12 12" fill="none" stroke="#ccc"><rect x="1.500" y="1.500" width="9" height="9"/><g fill="#ccc"><rect x="0" y="0" width="3" height="3"/><rect x="9" y="0" width="3" height="3"/><rect x="0" y="9" width="3" height="3"/><rect x="9" y="9" width="3" height="3"/></g></svg>
      <svg class="ml-[12px]" width="11" height="12" viewBox="0 0 11 12" fill="none" stroke="#ccc"><path d="M4.500 .5 H8 L10.500 3 V11.500 H4.500 Z"/><rect x="0" y="6" width="6" height="6" fill="#ccc" stroke="none"/></svg>
    </div>
    <div class="h-[24px] shrink-0 flex items-center pl-[3px] mt-[1px]">
      <div class="w-[155px] shrink-0 h-[23px] bg-[#424242] border border-[#5c5c5c] rounded-[3px] flex items-center justify-between pl-[9px] pr-[4px] text-[#e0e0e0]">通常<svg width="9" height="6" viewBox="0 0 9 6" fill="none" stroke="#999"><path d="M1 1 L4.500 4.500 L8 1"/></svg></div>
      <span class="ml-[9px] w-[60px] shrink-0 text-[#bcbcbc]">不透明度 :</span>
      <span class="w-[50px] h-[21px] shrink-0 bg-[#424242] border border-[#5c5c5c] rounded-[2px] flex items-center pl-[3px] text-[#dcdcdc] tracking-[-0.3px]">100%</span>
    </div>
    <div class="h-[31px] shrink-0 mt-[2px] border-t border-[#3f3f3f] flex items-center pl-[7px] text-[#bcbcbc]">
      <span class="w-[39px] tracking-[-0.6px]">ロック :</span>
      <svg width="11" height="11" viewBox="0 0 11 11"><rect x=".5" y=".5" width="10" height="10" fill="#777" stroke="#bbb"/><rect x="1" y="1" width="3" height="3" fill="#ccc"/><rect x="7" y="1" width="3" height="3" fill="#ccc"/><rect x="4" y="4" width="3" height="3" fill="#ccc"/><rect x="1" y="7" width="3" height="3" fill="#ccc"/><rect x="7" y="7" width="3" height="3" fill="#ccc"/></svg>
      <svg class="ml-[11px]" width="14" height="14" viewBox="0 0 16 18" fill="#999"><path d="M15 0 L16 1 L8 11 L5 8 Z"/><path d="M4 9 L7 12 C7 15 3 17 0 17 C2 15 1 11 4 9Z"/></svg>
      <svg class="ml-[7px]" width="14" height="14" viewBox="0 0 14 14" fill="none" stroke="#ddd" stroke-width="1.500"><path d="M7 1 V13 M1 7 H13 M5 3 L7 1 L9 3 M5 11 L7 13 L9 11 M3 5 L1 7 L3 9 M11 5 L13 7 L11 9"/></svg>
      <svg class="ml-[9px]" width="14" height="14" viewBox="0 0 14 14" fill="none" stroke="#ddd"><path d="M3 3 H9 L11 5 V11 H3 Z"/><path d="M0 3 H2 M12 3 H14 M0 11 H2 M12 11 H14 M3 0 V2 M11 0 V2 M3 12 V14 M11 12 V14"/></svg>
      <svg class="ml-[10px]" width="11" height="13" viewBox="0 0 11 13"><path d="M3 6 V3.500 a2.500 2.500 0 0 1 5 0 V6" fill="none" stroke="#ddd" stroke-width="1.300"/><rect x="0" y="5.500" width="11" height="7.500" fill="#ddd"/><rect x="4.500" y="8" width="2" height="2.500" fill="#535353"/></svg>
      <span class="ml-[47px] w-[33px] shrink-0 text-[#7e7e7e]">塗り :</span>
      <span class="w-[50px] h-[21px] shrink-0 bg-[#4a4a4a] border border-[#5a5a5a] rounded-[2px] flex items-center pl-[3px] text-[#7a7a7a] tracking-[-0.3px]">100%</span>
    </div>
    <div class="h-[25px] shrink-0 flex">
      <span class="w-[30px] pl-[1px] bg-[#3f3f3f] flex items-center justify-center"><svg width="14" height="9" viewBox="0 0 14 9"><path d="M0 4.500 C3 -1 11 -1 14 4.500 C11 10 3 10 0 4.500Z" fill="#ddd"/><circle cx="7" cy="4.500" r="2.500" fill="#3f3f3f"/><circle cx="7" cy="4.500" r="1.200" fill="#ddd"/></svg></span>
      <div class="flex-1 bg-[#666] flex items-center text-[#f0f0f0] font-bold pl-[3px]"><svg width="10" height="6" viewBox="0 0 9 6" fill="none" stroke="#aaa"><path d="M1 1 L4.500 4.500 L8 1"/></svg><span class="ml-[9px] tracking-[-0.8px]">アートボード 1</span></div>
    </div>
    <div class="h-[35px] shrink-0 flex items-center border-b border-[#4a4a4a] box-content">
      <span class="w-[30px] pl-[1px] flex items-center justify-center"><svg width="14" height="9" viewBox="0 0 14 9"><path d="M0 4.500 C3 -1 11 -1 14 4.500 C11 10 3 10 0 4.500Z" fill="#ddd"/><circle cx="7" cy="4.500" r="2.500" fill="#535353"/><circle cx="7" cy="4.500" r="1.200" fill="#ddd"/></svg></span>
      <span class="ml-[21px] w-[32px] h-[25px] border border-[#222] bg-[conic-gradient(#c8c8c8_25%,#fff_0_50%,#c8c8c8_0_75%,#fff_0)] bg-[length:10px_10px]"></span>
      <span class="ml-[11px] text-[#d8d8d8] tracking-[-0.7px]">レイヤー 1</span>
    </div>
    <div class="h-[25px] shrink-0 bg-[#4c4c4c]"></div>
  </aside>
</div>

<!-- tooltip -->
<div class="absolute left-[48px] top-[116px] w-[248px] h-[56px] bg-white rounded-[5px] pl-[10px] pt-[8px] whitespace-nowrap [font-feature-settings:normal]">
  <div class="h-[14px] font-bold text-[#333] text-[12px] leading-[14px] tracking-[-0.1px]">アートボードツール (V)</div>
  <div class="h-[14px] mt-[8px] text-[#666] leading-[14px]">複数のカンバスを作成、移動、サイズ変更</div>
</div>
</div>
</body></html>
